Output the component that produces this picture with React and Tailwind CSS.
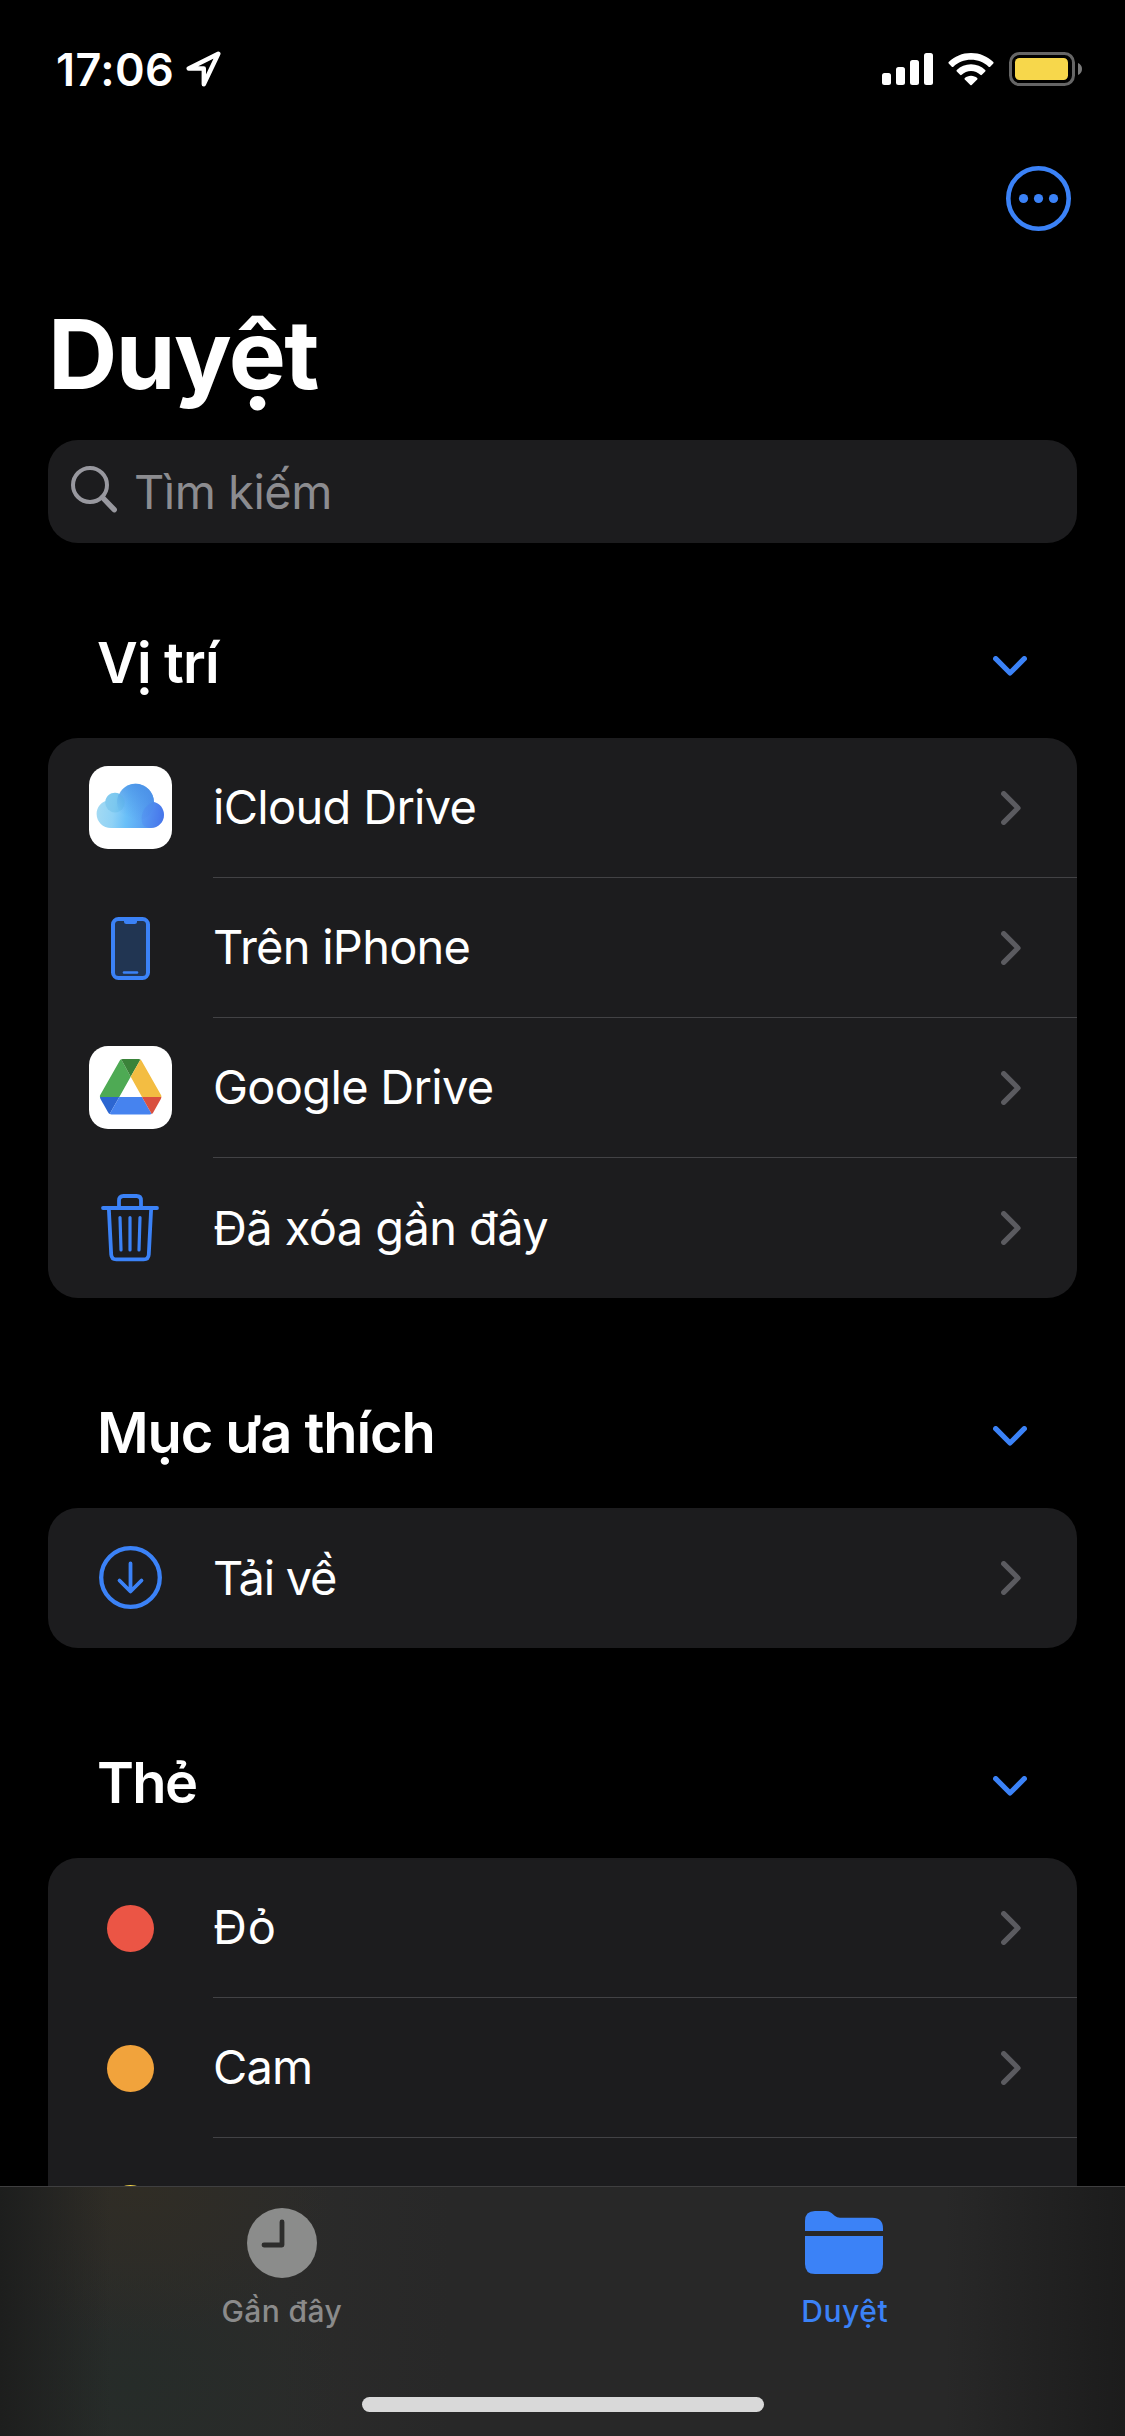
import React from 'react';

const ICloudIcon = () => (
  <svg className="mb-px" width="83" height="83" viewBox="0 0 83 83">
    <defs>
      <linearGradient id="cloud" gradientUnits="userSpaceOnUse" x1="7" y1="46" x2="75" y2="54">
        <stop offset="0" stopColor="#a4daf3" />
        <stop offset="0.25" stopColor="#8fd2f6" />
        <stop offset="0.45" stopColor="#69bff8" />
        <stop offset="0.7" stopColor="#5aa3f3" />
        <stop offset="1" stopColor="#4472e8" />
      </linearGradient>
      <linearGradient id="cloudTop" gradientUnits="userSpaceOnUse" x1="36" y1="54" x2="52" y2="20">
        <stop offset="0.1" stopColor="#4a90e6" stopOpacity="0" />
        <stop offset="1" stopColor="#4a90e6" stopOpacity="0.85" />
      </linearGradient>
    </defs>
    <rect width="83" height="83" rx="19" fill="#fff" />
    <path
      d="M22 62C14 62 7.6 55.800 7.600 48C7.600 42 11.200 37 16.400 35C17 30.200 21.200 26.800 26 26.800C27.600 26.800 29.200 27.200 30.600 28C33.400 21.800 39.400 17.700 46.500 17.700C56.600 17.700 64.800 25.800 65 35.900C70.800 37.200 75 42.600 75 48.800C75 56.100 69.200 62 62 62Z"
      fill="url(#cloud)"
    />
    <circle cx="46.500" cy="36.300" r="18.500" fill="url(#cloudTop)" />
    <circle cx="26" cy="36.600" r="9.800" fill="#4fb0e0" fillOpacity="0.28" />
    <path d="M53.500 58C51 50 54 39 65 35.900C70.800 37.200 75 42.600 75 48.800C75 56.100 69.200 62 62 62C58.500 62 55.500 60.500 53.500 58Z" fill="#4a78ee" fillOpacity="0.25" />
  </svg>
);

const GoogleDriveIcon = () => (
  <svg className="mb-px" width="83" height="83" viewBox="0 0 83 83">
    <rect width="83" height="83" rx="19" fill="#fff" />
    <path d="M32.200 13.300L41.700 30.700L30.300 51H11Q10.600 50 11.200 49L30.400 15.200Q31 14 32.200 13.300Z" fill="#4eaa54" />
    <path d="M32.200 13.300Q32.900 13 34 13H49.500Q50.600 13 51.500 13.500L41.700 30.700Z" fill="#3a8339" />
    <path d="M51.500 13.500Q52.200 14 53 15.400L72 49Q72.600 50 72.400 51H53L41.700 30.700Z" fill="#f3bd42" />
    <path d="M11 51H30.300L20.700 68.100Q19.800 67.500 19.200 66.500L11.500 53Q11 52 11 51Z" fill="#2c66d1" />
    <path d="M30.300 51H53L62.700 68.100Q61.900 68.500 60.800 68.500H22.600Q21.500 68.500 20.700 68.100Z" fill="#4683ef" />
    <path d="M53 51H72.400Q72.300 52 71.800 53L64.200 66.500Q63.600 67.500 62.700 68.100Z" fill="#d9503f" />
  </svg>
);

const PhoneIcon = () => (
  <svg width="39" height="63" viewBox="0 0 39 63" fill="none">
    <rect x="2" y="2" width="35" height="59" rx="5.500" fill="#213552" stroke="#3b82f7" strokeWidth="4" />
    <path d="M13 3H26V4.500Q26 7 23.500 7H15.500Q13 7 13 4.500Z" fill="#3b82f7" />
    <path d="M13 55.500H26" stroke="#3b82f7" strokeWidth="2.600" strokeLinecap="round" />
  </svg>
);

const TrashIcon = () => (
  <svg className="mr-px mb-px" width="58" height="68" viewBox="0 0 58 68" fill="none" stroke="#3b82f7" strokeWidth="3.800" strokeLinecap="round" strokeLinejoin="round">
    <path d="M2 14H56" />
    <path d="M18 14V6.500Q18 2 22.500 2H35.500Q40 2 40 6.500V14" />
    <path d="M7.800 14L10.200 60.500Q10.500 65.400 15.300 65.400H42.700Q47.500 65.400 47.800 60.500L50.200 14" />
    <path d="M19 23.500L20 56M29 23.500V56M39 23.500L38 56" strokeWidth="3.200" />
  </svg>
);

const DownloadIcon = () => (
  <svg className="mb-px" width="63" height="63" viewBox="0 0 63 63" fill="none" stroke="#3b82f7" strokeLinecap="round" strokeLinejoin="round">
    <circle cx="31.500" cy="31.500" r="29.300" strokeWidth="4.300" />
    <path d="M31.500 17.500V45M20.500 34.500L31.500 45.500L42.500 34.500" strokeWidth="3.800" />
  </svg>
);

const MoreIcon = () => (
  <svg width="65" height="65" viewBox="0 0 65 65" fill="#3b82f7">
    <circle cx="32.500" cy="32.500" r="30.200" fill="none" stroke="#3b82f7" strokeWidth="4.600" />
    <circle cx="17.500" cy="32.500" r="4.600" />
    <circle cx="32.500" cy="32.500" r="4.600" />
    <circle cx="47.500" cy="32.500" r="4.600" />
  </svg>
);

const SearchIcon = () => (
  <svg className="-mt-[4px]" width="46" height="47" viewBox="0 0 46 47" fill="none" stroke="#98989f" strokeLinecap="round">
    <circle cx="19" cy="19" r="17" strokeWidth="4" />
    <path d="M31.500 31.500L43.200 43.700" strokeWidth="5.400" />
  </svg>
);

const ClockIcon = () => (
  <svg width="70" height="70" viewBox="0 0 70 70">
    <circle cx="35" cy="35" r="35" fill="#8b8c8b" />
    <path d="M35 14V37H17" fill="none" stroke="#2d2d2c" strokeWidth="4.800" strokeLinecap="round" strokeLinejoin="round" />
  </svg>
);

const FolderIcon = () => (
  <svg width="78" height="63" viewBox="0 0 78 63" fill="#3b82f7">
    <path d="M0 20V10Q0 0 10 0H21Q24 0 26.500 2L30 5Q32 6.800 35 6.800H67.500Q78 6.800 78 17.500V20Z" />
    <path d="M0 25H78V53Q78 63 68 63H10Q0 63 0 53Z" />
  </svg>
);

const ChevronDown = () => (
  <svg width="34" height="20" viewBox="0 0 34 20" fill="none" stroke="#3b82f7" strokeWidth="5.200" strokeLinecap="round" strokeLinejoin="round">
    <path d="M2.700 2.700L17 17L31.300 2.700" />
  </svg>
);

const ChevronRight = () => (
  <svg width="20" height="34" viewBox="0 0 20 34" fill="none" stroke="#5b5b60" strokeWidth="5.200" strokeLinecap="round" strokeLinejoin="round">
    <path d="M2.700 2.700L17 17L2.700 31.300" />
  </svg>
);

const Dot = ({ className }) => <div className={`w-[47px] h-[47px] rounded-full ${className}`} />;

const sections = [
  {
    title: 'Vị trí',
    titleClass: 'tracking-[-0.8px]',
    rows: [
      { label: 'iCloud Drive', icon: <ICloudIcon />, labelClass: 'tracking-[-0.7px]' },
      { label: 'Trên iPhone', icon: <PhoneIcon />, labelClass: 'tracking-[-0.75px]' },
      { label: 'Google Drive', icon: <GoogleDriveIcon />, labelClass: 'tracking-[-0.7px]' },
      { label: 'Đã xóa gần đây', icon: <TrashIcon />, labelClass: 'tracking-[-0.6px]' },
    ],
  },
  {
    title: 'Mục ưa thích',
    titleClass: 'tracking-[-1.1px]',
    rows: [{ label: 'Tải về', icon: <DownloadIcon />, labelClass: 'tracking-[-1.3px]' }],
  },
  {
    title: 'Thẻ',
    titleClass: 'tracking-[-1.6px]',
    rows: [
      { label: 'Đỏ', icon: <Dot className="bg-[#eb5545]" />, labelClass: 'tracking-[0.8px]' },
      { label: 'Cam', icon: <Dot className="bg-[#f1a33c]" />, labelClass: 'tracking-[-0.8px]' },
      { label: 'Vàng', icon: <Dot className="bg-[#f7d74b]" />, labelClass: 'tracking-[-0.7px]' },
    ],
  },
];

const StatusBar = () => (
  <div className="flex h-[138px] items-center justify-between pl-[56px] pr-[43px]">
    <div className="flex items-center gap-[12px]">
      <span className="text-[45px] font-semibold leading-none tracking-[0.4px]">17:06</span>
      <svg width="35" height="36" viewBox="0 0 35 36" fill="none" stroke="#fff" strokeWidth="4.400" strokeLinejoin="round">
        <path d="M32.300 2.700L2.700 17.500H17.800V33.300Z" />
      </svg>
    </div>
    <div className="flex items-center gap-[15px]">
      <svg width="51" height="32" viewBox="0 0 51 32" fill="#fff">
        <rect x="0" y="20" width="9" height="12" rx="2.500" />
        <rect x="14" y="14" width="9" height="18" rx="2.500" />
        <rect x="28" y="7" width="9" height="25" rx="2.500" />
        <rect x="42" y="0" width="9" height="32" rx="2.500" />
      </svg>
      <svg width="46" height="33" viewBox="0 0 46 33" fill="#fff">
        <path d="M23 0C31.800 0 39.500 3.400 45.300 9Q46 9.800 45.300 10.600L42.200 13.700Q41.400 14.400 40.600 13.700C35.900 9.300 29.800 6.800 23 6.800S10.100 9.300 5.400 13.700Q4.600 14.400 3.800 13.700L0.700 10.600Q0 9.800 0.700 9C6.500 3.400 14.200 0 23 0Z" />
        <path d="M23 11.200C28.600 11.200 33.400 13.400 37.200 16.900Q38 17.700 37.200 18.500L33.900 21.800Q33.100 22.500 32.300 21.800C29.800 19.500 26.600 18.100 23 18.100S16.200 19.500 13.700 21.800Q12.900 22.500 12.100 21.800L8.800 18.500Q8 17.700 8.800 16.900C12.600 13.400 17.400 11.200 23 11.200Z" />
        <path d="M23 22.800C25.500 22.800 27.500 23.700 29.200 25.100Q29.900 25.800 29.200 26.500L23.700 32Q23 32.600 22.300 32L16.800 26.500Q16.100 25.800 16.800 25.100C18.500 23.700 20.500 22.800 23 22.800Z" />
      </svg>
      <svg width="73" height="34" viewBox="0 0 73 34">
        <rect x="1.500" y="1.500" width="63" height="31" rx="9" fill="none" stroke="#666" strokeWidth="3" />
        <rect x="6" y="6" width="53" height="22" rx="4.500" fill="#f7d74b" />
        <path d="M69 11Q73 12.800 73 17T69 23Z" fill="#7a7a7a" />
      </svg>
    </div>
  </div>
);

const Section = ({ title, titleClass, rows, first }) => (
  <section>
    <div className={`flex h-[150px] items-center justify-between pl-[49px] pr-[50px] ${first ? 'mt-[45px]' : 'mt-[60px]'}`}>
      <h2 className={`text-[56px] font-semibold leading-none whitespace-nowrap ${titleClass}`}>{title}</h2>
      <div className="mt-[6px]">
        <ChevronDown />
      </div>
    </div>
    <div className="overflow-hidden rounded-[30px] bg-[#1c1c1e]">
      {rows.map((row, i) => (
        <div key={row.label} className="flex h-[140px]">
          <div className="flex w-[165px] items-center justify-center">{row.icon}</div>
          <div className={`flex flex-1 items-center justify-between pr-[56px] ${i < rows.length - 1 ? 'border-b border-[#424245]' : ''}`}>
            <span className={`pb-[2px] text-[47px] leading-none whitespace-nowrap ${row.labelClass}`}>{row.label}</span>
            <ChevronRight />
          </div>
        </div>
      ))}
    </div>
  </section>
);

const TabBar = () => (
  <nav className="absolute inset-x-0 bottom-0 h-[250px] border-t border-[#3f3f40] bg-[linear-gradient(90deg,transparent_84%,#1c1c1c_100%),linear-gradient(90deg,#1d1e1d_0px,transparent_110px),radial-gradient(ellipse_190px_150px_at_140px_0px,#302d25,transparent),radial-gradient(ellipse_220px_150px_at_130px_200px,#262c29,transparent),linear-gradient(90deg,#2b2b2a_0%,#2b2b2a_25%,#282828_40%)]">
    <div className="grid grid-cols-2">
      <div className="flex flex-col items-center pt-[21px] pl-px text-[#8b8b8b]">
        <ClockIcon />
        <span className="mt-[17px] text-[30px] font-medium leading-[32px] tracking-[0.4px]">Gần đây</span>
      </div>
      <div className="flex flex-col items-center pt-[24px] text-[#3b82f7]">
        <FolderIcon />
        <span className="mt-[21px] pl-[2px] text-[30px] font-medium leading-[32px] tracking-[0.6px]">Duyệt</span>
      </div>
    </div>
    <div className="absolute bottom-[24px] left-[362px] h-[15px] w-[402px] rounded-full bg-[#d9d9d9]" />
  </nav>
);

const App = () => {
  return (
    <div className="relative h-[2436px] w-[1125px] overflow-hidden bg-black font-['Inter',sans-serif] text-white">
      <StatusBar />
      <main className="px-[48px]">
        {/* Tiêu đề */}
        <div className="flex h-[121px] items-center justify-end pr-[6px]">
          <MoreIcon />
        </div>
        <h1 className="h-[181px] text-[96px] font-bold leading-[190px] tracking-[-1.5px]">Duyệt</h1>

        {/* Ô tìm kiếm */}
        <div className="flex h-[103px] items-center gap-[17px] rounded-[30px] bg-[#1c1c1e] pl-[23px]">
          <SearchIcon />
          <span className="text-[47px] leading-none text-[#8c8c90] tracking-[-0.5px]">Tìm kiếm</span>
        </div>

        {sections.map((section, i) => (
          <Section key={section.title} {...section} first={i === 0} />
        ))}
      </main>
      <TabBar />
    </div>
  );
};

export default App;
